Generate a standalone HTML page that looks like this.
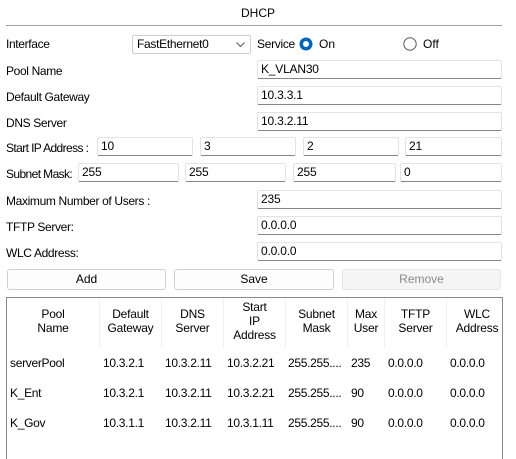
<!DOCTYPE html>
<html><head><meta charset="utf-8"><style>
*{box-sizing:border-box;margin:0;padding:0}
body{width:516px;height:458px;background:#fff;font-family:"Liberation Sans",sans-serif;font-size:12px;color:#000;position:relative;overflow:hidden}
.a{position:absolute;white-space:nowrap}
.l{position:absolute;left:6px;line-height:14px;letter-spacing:-0.35px;white-space:nowrap}
.in{position:absolute;background:#fff;border:1px solid #e3e3e3;border-bottom:1px solid #868686;border-radius:2px;padding-left:3px;line-height:17px;height:19px;letter-spacing:-0.2px}
.btn{position:absolute;top:269px;height:21px;border:1px solid #d0d0d0;border-radius:3px;background:#fdfdfd;text-align:center;line-height:19px}
.th{position:absolute;top:300px;text-align:center;line-height:14px;letter-spacing:-0.2px}
.vl{position:absolute;top:298px;height:50px;width:1px;background:#f0f0f0}
.td{position:absolute;line-height:14px;letter-spacing:-0.3px}
</style></head><body>
<div class="a" style="left:0;width:516px;top:6px;text-align:center">DHCP</div>
<div class="a" style="left:6px;top:25px;width:496px;height:1px;background:#a0a0a0"></div>

<div class="l" style="top:37px">Interface</div>
<div class="a" style="left:132px;top:35px;width:119px;height:19px;border:1px solid #cfcfcf;background:#fff;border-radius:2px;padding-left:4px;line-height:17px;letter-spacing:-0.3px">FastEthernet0
<svg style="position:absolute;right:5px;top:6px" width="9" height="6" viewBox="0 0 9 6"><path d="M0.5 0.5L4.5 4.5L8.5 0.5" fill="none" stroke="#555" stroke-width="1"/></svg></div>
<div class="a" style="left:257px;top:37px;letter-spacing:-0.3px">Service</div>
<svg class="a" style="left:299px;top:37px" width="14" height="14"><circle cx="7" cy="7" r="6.5" fill="#0067c0"/><circle cx="7" cy="7" r="3" fill="#fff"/></svg>
<div class="a" style="left:319px;top:37px">On</div>
<svg class="a" style="left:403px;top:37px" width="14" height="14"><circle cx="7" cy="7" r="6.2" fill="#fff" stroke="#5a5a5a" stroke-width="1"/></svg>
<div class="a" style="left:423px;top:37px">Off</div>

<div class="l" style="top:64px">Pool Name</div>
<div class="in" style="left:257px;top:60px;width:245px">K_VLAN30</div>
<div class="l" style="top:90px">Default Gateway</div>
<div class="in" style="left:257px;top:86px;width:245px">10.3.3.1</div>
<div class="l" style="top:116px">DNS Server</div>
<div class="in" style="left:257px;top:112px;width:245px">10.3.2.11</div>

<div class="l" style="top:141px;letter-spacing:-0.6px">Start IP Address :</div>
<div class="in" style="left:97px;top:137px;width:96px">10</div>
<div class="in" style="left:200px;top:137px;width:96px">3</div>
<div class="in" style="left:303px;top:137px;width:96px">2</div>
<div class="in" style="left:405px;top:137px;width:97px">21</div>

<div class="l" style="top:167px;letter-spacing:-0.6px">Subnet Mask:</div>
<div class="in" style="left:78px;top:163px;width:101px">255</div>
<div class="in" style="left:185px;top:163px;width:101px">255</div>
<div class="in" style="left:293px;top:163px;width:103px">255</div>
<div class="in" style="left:400px;top:163px;width:102px">0</div>

<div class="l" style="top:194px">Maximum Number of Users :</div>
<div class="in" style="left:257px;top:190px;width:245px">235</div>
<div class="l" style="top:220px">TFTP Server:</div>
<div class="in" style="left:257px;top:216px;width:245px">0.0.0.0</div>
<div class="l" style="top:246px">WLC Address:</div>
<div class="in" style="left:257px;top:242px;width:245px">0.0.0.0</div>

<div class="btn" style="left:7px;width:159px">Add</div>
<div class="btn" style="left:174px;width:160px">Save</div>
<div class="btn" style="left:342px;width:159px;color:#8a8a8a;background:#f5f5f5;border-color:#e6e6e6">Remove</div>

<div class="a" style="left:6px;top:297px;width:497px;height:162px;border:1px solid #8a8a8a;border-bottom:none"></div>
<div class="vl" style="left:99px"></div><div class="vl" style="left:161px"></div><div class="vl" style="left:223px"></div><div class="vl" style="left:285px"></div><div class="vl" style="left:347px"></div><div class="vl" style="left:384px"></div><div class="vl" style="left:446px"></div>
<div class="th" style="left:7px;width:92px;top:307px">Pool<br>Name</div>
<div class="th" style="left:100px;width:61px;top:307px">Default<br>Gateway</div>
<div class="th" style="left:162px;width:61px;top:307px">DNS<br>Server</div>
<div class="th" style="left:224px;width:61px;top:300px">Start<br>IP<br>Address</div>
<div class="th" style="left:286px;width:61px;top:307px">Subnet<br>Mask</div>
<div class="th" style="left:348px;width:36px;top:307px">Max<br>User</div>
<div class="th" style="left:385px;width:61px;top:307px">TFTP<br>Server</div>
<div class="th" style="left:447px;width:60px;top:307px">WLC<br>Address</div>

<div class="td" style="top:356px;left:10px">serverPool</div><div class="td" style="top:356px;left:103px">10.3.2.1</div><div class="td" style="top:356px;left:165px">10.3.2.11</div><div class="td" style="top:356px;left:227px">10.3.2.21</div><div class="td" style="top:356px;left:288px">255.255....</div><div class="td" style="top:356px;left:351px">235</div><div class="td" style="top:356px;left:388px">0.0.0.0</div><div class="td" style="top:356px;left:450px">0.0.0.0</div>
<div class="td" style="top:386px;left:10px">K_Ent</div><div class="td" style="top:386px;left:103px">10.3.2.1</div><div class="td" style="top:386px;left:165px">10.3.2.11</div><div class="td" style="top:386px;left:227px">10.3.2.21</div><div class="td" style="top:386px;left:288px">255.255....</div><div class="td" style="top:386px;left:351px">90</div><div class="td" style="top:386px;left:388px">0.0.0.0</div><div class="td" style="top:386px;left:450px">0.0.0.0</div>
<div class="td" style="top:416px;left:10px">K_Gov</div><div class="td" style="top:416px;left:103px">10.3.1.1</div><div class="td" style="top:416px;left:165px">10.3.2.11</div><div class="td" style="top:416px;left:227px">10.3.1.11</div><div class="td" style="top:416px;left:288px">255.255....</div><div class="td" style="top:416px;left:351px">90</div><div class="td" style="top:416px;left:388px">0.0.0.0</div><div class="td" style="top:416px;left:450px">0.0.0.0</div>
</body></html>
